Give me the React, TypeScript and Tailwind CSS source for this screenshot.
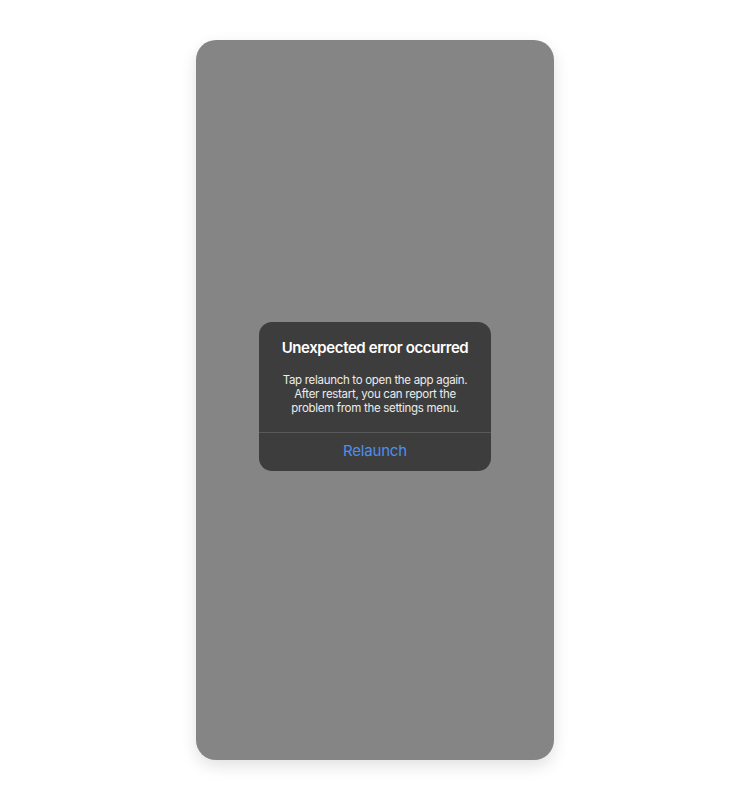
import React from "react";

const App = () => {
    return (
        <div className="w-full min-h-screen bg-white flex justify-center pt-10 font-['Inter','Noto_Sans',sans-serif]">
            <div className="relative w-[358px] h-[720px] rounded-[20px] bg-[#858585] shadow-[0_6px_16px_rgba(0,0,0,0.12)] flex items-center justify-center">
                {/* Alert */}
                <div className="w-[232px] mb-2 rounded-[13px] bg-[#3d3d3d] text-white text-center">
                    <div className="pt-4 pb-[17px] px-3">
                        <h2 className="text-[15px] leading-5 font-semibold tracking-[-0.4px]">
                            Unexpected error occurred
                        </h2>
                        <p className="mt-[15px] text-[11.5px] leading-[14px] tracking-[-0.3px] text-[#ececec]">
                            Tap relaunch to open the app again.
                            <br />
                            After restart, you can report the
                            <br />
                            problem from the settings menu.
                        </p>
                    </div>
                    <div className="border-t border-[#595959]">
                        <button className="w-full h-[38px] text-[15px] tracking-[-0.2px] text-[#4d8ff0]">Relaunch</button>
                    </div>
                </div>
            </div>
        </div>
    );
};

export default App;
